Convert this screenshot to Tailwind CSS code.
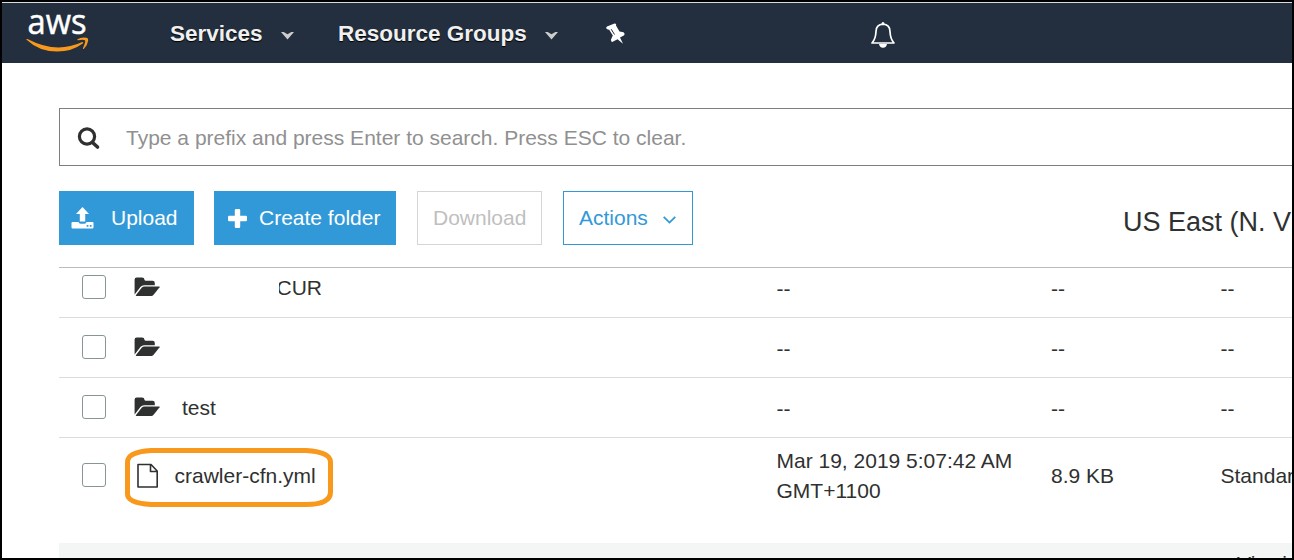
<!DOCTYPE html>
<html lang="en">
<head>
<meta charset="utf-8">
<title>S3 bucket</title>
<script src="https://cdn.jsdelivr.net/npm/@tailwindcss/browser@4"></script>
</head>
<body class="w-[1294px] h-[560px] overflow-hidden">
<svg width="0" height="0" class="absolute">
  <symbol id="folder" viewBox="0 0 26 20">
    <path fill="#2f3130" d="M.6 2.500Q.6.4 2.700.4H8Q10.400.4 10.400 2.600Q10.400 3.700 11.500 3.700H18.500Q20.800 3.700 20.800 6V8.200H10Q8 8.200 6.600 9.700L.6 17.400Z"/>
    <path fill="#2f3130" d="M10.300 9.400H25.300q.7 0 .3.800L19.400 18Q18.600 19 17.300 19H2.500Q1.300 19 2 17.900L7.700 10.700Q8.800 9.400 10.300 9.400Z"/>
  </symbol>
</svg>
<div class="w-full h-full border-2 border-black bg-white overflow-hidden flex flex-col font-['Liberation_Sans',Arial,sans-serif] text-[21px] leading-[30px] text-[#2f3130] whitespace-nowrap">
  <header class="h-[61px] shrink-0 border-t border-[#d9dcdf] bg-[#232f3e] flex items-center text-[22.500px] font-bold text-[#f0f0f0] [text-shadow:0_1px_1px_#000]">
    <svg class="ml-6 w-[64px] h-[40px] shrink-0 [text-shadow:none]" viewBox="0 0 64 40">
      <text x="1.500" y="21" textLength="59" lengthAdjust="spacingAndGlyphs" font-family="Open Sans" font-size="34" font-weight="500" fill="#fff" stroke="#fff" stroke-width=".5">aws</text>
      <path fill="#f8991d" d="M.6 26.700Q-.3 25.600 1.500 26Q30 41 55.700 29.300Q58 28.600 56.700 30.400Q46 38.500 31 38.500Q13 38.500 .6 26.700Z"/>
      <path fill="#f8991d" d="M51.500 26.300Q55 24 60.500 24.800Q62.500 25 62.200 27.500Q61.500 32.500 58 35.700Q56.700 36.500 57 35Q60 28.500 59 27.300Q57.500 26.400 52 27.300Q50.700 27.300 51.500 26.300Z"/>
    </svg>
    <span class="ml-[80px] mt-px w-[93px] shrink-0">Services</span>
    <svg class="ml-[18px] w-[13px] h-[8px] mt-[5px]" viewBox="0 0 13 8"><path fill="#ccc" d="M0 0H2.700L6.500 2.300L10.300 0H13L6.500 7.500Z"/></svg>
    <span class="ml-[44px] mt-px w-[189px] shrink-0">Resource Groups</span>
    <svg class="ml-[18px] w-[13px] h-[8px] mt-[5px]" viewBox="0 0 13 8"><path fill="#ccc" d="M0 0H2.700L6.500 2.300L10.300 0H13L6.500 7.500Z"/></svg>
    <svg class="ml-[48px] mt-[2px] w-[20px] h-[22px]" viewBox="0 0 20 22">
      <path fill="#fff" d="M1 3.500L8.500 .4Q10.700 .3 10 2.600L13.500 8.500L17.500 9.200Q19.500 11 17.800 12.500L14 14.600L17 20.800L11.500 16.200L6.200 19.100Q4.800 18.500 5 16.500L6.800 12.600L3.200 6.800Q.2 6.500 .2 4.500Z"/>
      <path stroke="#232f3e" stroke-width="1" fill="none" d="M5.200 6.200L8.500 11.500"/>
    </svg>
    <svg class="ml-[244px] mt-[3px] w-[26px] h-[28px]" viewBox="0 0 26 28">
      <path fill="none" stroke="#fff" stroke-width="1.700" stroke-linejoin="round" d="M2 22Q5.700 18 6 10.500Q6.200 3.500 13 3.200Q19.800 3.500 20 10.500Q20.300 18 24 22Z"/>
      <path fill="#fff" d="M11.500 3Q11.500 1 13 1T14.500 3ZM9 23H17Q16.500 26.700 13 26.700T9 23Z"/>
    </svg>
  </header>
  <main class="pl-[57px] w-[1290px] flex flex-col overflow-hidden grow">
    <div class="mt-[45px] h-[58px] shrink-0 border border-r-0 border-[#7f7f7f] flex items-center">
      <svg class="ml-[17px] w-[24px] h-[24px] mt-[4px]" viewBox="0 0 24 24"><circle cx="10" cy="9.500" r="7.600" fill="none" stroke="#2f3130" stroke-width="3.200"/><path d="M15.500 15.500L20.500 20" stroke="#2f3130" stroke-width="3.600" stroke-linecap="round"/></svg>
      <span class="ml-[25px] mt-[2px] text-[#909090]">Type a prefix and press Enter to search. Press ESC to clear.</span>
    </div>
    <div class="mt-[25px] h-[54px] shrink-0 flex items-center">
      <div class="w-[135px] shrink-0 h-full bg-[#3299d8] text-white flex items-center">
        <svg class="ml-[12px] w-[23px] h-[22px]" viewBox="0 0 23 22"><path fill="#fff" d="M11.500 0L18 7H14.200V14.500H8.800V7H5ZM1.500 15H7.500Q8 16.800 9.500 16.800H13.500Q15 16.800 15.500 15H21.500Q22.500 15 22.500 16V20.200Q22.500 21.500 21.300 21.500H1.700Q.5 21.500 .5 20.200V16Q.5 15 1.500 15Z"/><path fill="#3299d8" d="M15.700 18h1.700v1.700h-1.700zM18.800 18h1.700v1.700h-1.700z"/></svg>
        <span class="ml-[17px]">Upload</span>
      </div>
      <div class="ml-5 w-[182px] shrink-0 h-full bg-[#3299d8] text-white flex items-center">
        <svg class="ml-[14px] w-[19px] h-[19px]" viewBox="0 0 19 19"><path fill="#fff" d="M8 0H11Q12.200 0 12.200 1.200V6.800H17.800Q19 6.800 19 8V11Q19 12.200 17.800 12.200H12.200V17.800Q12.200 19 11 19H8Q6.800 19 6.800 17.800V12.200H1.200Q0 12.200 0 11V8Q0 6.800 1.200 6.800H6.800V1.200Q6.800 0 8 0Z"/></svg>
        <span class="ml-[12px]">Create folder</span>
      </div>
      <div class="ml-[21px] w-[125px] shrink-0 h-full border border-[#d5d5d5] text-[#bfbfbf] flex items-center pl-[15px]">Download</div>
      <div class="ml-[21px] w-[130px] shrink-0 h-full border border-[#3299d8] text-[#3299d8] flex items-center pl-[15px]">
        Actions
        <svg class="ml-[15px] w-[13px] h-[8px] mt-[3px]" viewBox="0 0 13 8"><path fill="none" stroke="#3299d8" stroke-width="1.800" d="M.7 .8L6.500 6.600L12.300 .8"/></svg>
      </div>
      <span class="ml-[430px] mt-[8px] text-[27px]">US East (N. V</span>
    </div>
    <div class="mt-[22px] shrink-0 border-t border-[#bdbdbd]">
      <div class="h-[50px] border-b border-[#dcdcdc] grid grid-cols-[717.500px_274.500px_169.500px_200px]">
        <div class="flex items-start pt-[7px]"><span class="ml-[23px] w-6 h-6 border border-[#879596] rounded-[3px]"></span><svg class="ml-[28px] mt-[2px] w-[26px] h-5"><use href="#folder"/></svg><span class="ml-[118.500px] -mt-[2px] overflow-hidden"><span class="-ml-[2px]">CUR</span></span></div>
        <span class="pt-[6px]">--</span><span class="pt-[6px]">--</span><span class="pt-[6px]">--</span>
      </div>
      <div class="h-[60px] border-b border-[#dcdcdc] grid grid-cols-[717.500px_274.500px_169.500px_200px]">
        <div class="flex items-start pt-[17px]"><span class="ml-[23px] w-6 h-6 border border-[#879596] rounded-[3px]"></span><svg class="ml-[28px] mt-[2px] w-[26px] h-5"><use href="#folder"/></svg></div>
        <span class="pt-[16px]">--</span><span class="pt-[16px]">--</span><span class="pt-[16px]">--</span>
      </div>
      <div class="h-[60px] border-b border-[#dcdcdc] grid grid-cols-[717.500px_274.500px_169.500px_200px]">
        <div class="flex items-start pt-[17px]"><span class="ml-[23px] w-6 h-6 border border-[#879596] rounded-[3px]"></span><svg class="ml-[28px] mt-[2px] w-[26px] h-5"><use href="#folder"/></svg><span class="ml-[22px] -mt-[2px]">test</span></div>
        <span class="pt-[16px]">--</span><span class="pt-[16px]">--</span><span class="pt-[16px]">--</span>
      </div>
      <div class="h-[105px] grid grid-cols-[717.500px_274.500px_169.500px_200px]">
        <div class="relative flex items-start pt-[25px]">
          <span class="ml-[23px] w-6 h-6 border border-[#879596] rounded-[3px]"></span>
          <svg class="ml-[31px] w-[22px] h-[26px]" viewBox="0 0 22 26"><path fill="none" stroke="#2f3130" stroke-width="1.600" stroke-linejoin="round" d="M1 1.500H14L20.200 8V24H1ZM13.500 1.500V8.500H20.200"/></svg>
          <span class="ml-[15.500px] -mt-[2px]">crawler-cfn.yml</span>
          <svg class="absolute left-[66px] top-[10px] w-[208px] h-[59px]" viewBox="0 0 208 59"><path fill="none" stroke="#f8991d" stroke-width="5" d="M26 2.500H181Q205.500 4 205.500 14V44Q205.500 56.500 181 56.500H26Q2.500 55 2.500 46V14Q2.500 4 26 2.500Z"/></svg>
        </div>
        <span class="pt-2">Mar 19, 2019 5:07:42 AM<br>GMT+1100</span><span class="pt-[23px]">8.9 KB</span><span class="pt-[23px]">Standard</span>
      </div>
      <div class="h-[60px] bg-[#f4f6f6] pl-[1178px] pt-[6px]">Viewing</div>
    </div>
  </main>
</div>
</body>
</html>
